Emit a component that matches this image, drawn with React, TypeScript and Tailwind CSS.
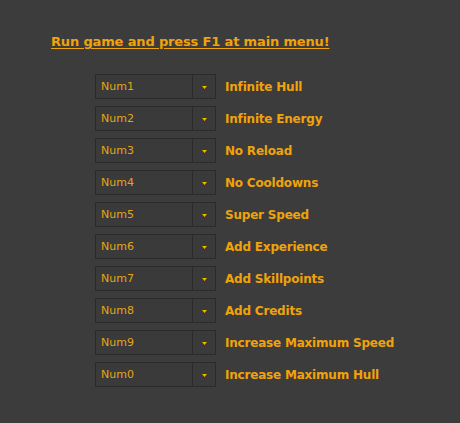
import React from "react";

const hotkeys = [
  { key: "Num1", label: "Infinite Hull" },
  { key: "Num2", label: "Infinite Energy" },
  { key: "Num3", label: "No Reload" },
  { key: "Num4", label: "No Cooldowns" },
  { key: "Num5", label: "Super Speed" },
  { key: "Num6", label: "Add Experience" },
  { key: "Num7", label: "Add Skillpoints" },
  { key: "Num8", label: "Add Credits" },
  { key: "Num9", label: "Increase Maximum Speed" },
  { key: "Num0", label: "Increase Maximum Hull" },
];

function KeySelect({ value }: { value: string }) {
  return (
    <div className="flex h-[25px] w-[121px] border border-[#2b2b2b] bg-[#3a3a3a]">
      <div className="flex flex-1 items-center pl-[5px] pt-[2px] text-[11px] text-[#e8a317]">{value}</div>
      <div className="flex w-[23px] items-center justify-center border-l border-[#2b2b2b] pt-[1px]">
        <svg width="5" height="3" viewBox="0 0 5 3">
          <path d="M0 0H5L2.5 3Z" fill="#f2b705" />
        </svg>
      </div>
    </div>
  );
}

export default function App() {
  return (
    <div
      className="h-[423px] w-[460px] bg-[#3c3c3c] pl-[51px] pt-[33px]"
      style={{ fontFamily: '"DejaVu Sans", Verdana, sans-serif' }}
    >
      <div className="text-[13px] font-bold leading-[18px] tracking-[-0.15px] text-[#f0a30a] underline underline-offset-2">
        Run game and press F1 at main menu!
      </div>
      <div className="mt-[23px] flex flex-col gap-[7px] pl-[44px]">
        {hotkeys.map((h) => (
          <div key={h.key} className="flex items-center gap-[9px]">
            <KeySelect value={h.key} />
            <span className="pt-[1px] text-[12px] font-bold tracking-[-0.2px] text-[#f0a30a]">{h.label}</span>
          </div>
        ))}
      </div>
    </div>
  );
}
